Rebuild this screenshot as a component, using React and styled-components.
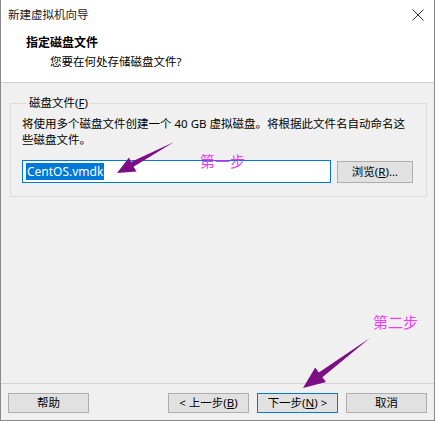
import React from 'react';
import styled, { createGlobalStyle } from 'styled-components';

const GlobalStyle = createGlobalStyle`
  html, body {
    margin: 0;
    padding: 0;
    background: #ffffff;
  }
  body {
    width: 435px;
    height: 421px;
    overflow: hidden;
    font-family: "Noto Sans", "Noto Sans CJK SC", sans-serif;
    font-size: 11.5px;
    color: #000;
  }
`;

const Window = styled.div`
  position: relative;
  box-sizing: border-box;
  width: 435px;
  height: 421px;
  display: flex;
  flex-direction: column;
  border-left: 1px solid #8a8a8a;
  border-right: 1px solid #8a8a8a;
  border-bottom: 1px solid #8a8a8a;
  background: #f0f0f0;
`;

const TitleBar = styled.div`
  height: 30px;
  background: #fff;
  display: flex;
  align-items: center;
  justify-content: space-between;
  padding: 0 10px 0 7px;
  color: #1a1a1a;
  line-height: 16px;
`;

const Header = styled.div`
  height: 53px;
  box-sizing: border-box;
  background: #fff;
  border-bottom: 1px solid #cfcfcf;
  padding: 5px 0 0 25px;
  display: flex;
  flex-direction: column;
  gap: 3px;
  line-height: 16px;
`;

const HeaderTitle = styled.div`
  font-weight: bold;
  font-size: 12px;
`;

const HeaderSub = styled.div`
  padding-left: 24px;
`;

const Body = styled.div`
  flex: 1;
  padding: 12px 7px 0 9px;
`;

const Group = styled.fieldset`
  margin: 0;
  padding: 0 13px 13px 11px;
  border: 1px solid #dcdcdc;
  min-width: 0;
`;

const Legend = styled.legend`
  margin-left: 5px;
  padding: 0 2px;
  line-height: 16px;
`;

const Description = styled.p`
  margin: 5px 0 0;
  line-height: 16px;
`;

const FileRow = styled.div`
  display: flex;
  align-items: flex-start;
  gap: 6px;
  margin-top: 12px;
`;

const TextField = styled.div`
  box-sizing: border-box;
  width: 309px;
  height: 23px;
  background: #fff;
  border: 1px solid #0078d7;
  padding: 2px 0 0 3px;
`;

const Selected = styled.span`
  display: inline-block;
  background: #0078d7;
  color: #fff;
  line-height: 17px;
  padding: 0 1px;
  font-size: 12px;
`;

const Button = styled.button`
  box-sizing: border-box;
  width: ${p => p.$w || 81}px;
  height: ${p => p.$h || 20}px;
  margin-top: ${p => p.$mt || 0}px;
  padding: 0;
  background: #e1e1e1;
  border: 1px solid ${p => (p.$default ? '#0078d7' : '#adadad')};
  font-family: inherit;
  font-size: 11.5px;
  color: #000;
  line-height: 16px;
`;

const Footer = styled.div`
  border-top: 1px solid #d5d5d5;
  height: 37px;
  box-sizing: border-box;
  padding: 9px 7px 0 7px;
  display: flex;
  gap: 8px;
`;

const Spacer = styled.div`
  flex: 1;
`;

const Overlay = styled.svg`
  position: absolute;
  left: -1px;
  top: 0;
  pointer-events: none;
`;

const Note = styled.div`
  position: absolute;
  left: ${p => p.$x}px;
  top: ${p => p.$y}px;
  color: #f03cf0;
  font-family: "Noto Sans CJK SC", sans-serif;
  font-size: 15px;
  line-height: 18px;
  white-space: nowrap;
`;

const U = styled.span`
  text-decoration: underline;
`;

const CloseIcon = () => (
  <svg width="12" height="12" viewBox="0 0 12 12">
    <path d="M0.5 0.5 L11.5 11.5 M11.5 0.5 L0.5 11.5" stroke="#333" strokeWidth="1" fill="none" />
  </svg>
);

export default function App() {
  return (
    <>
      <GlobalStyle />
      <Window>
        <TitleBar>
          <span>新建虚拟机向导</span>
          <CloseIcon />
        </TitleBar>
        <Header>
          <HeaderTitle>指定磁盘文件</HeaderTitle>
          <HeaderSub>您要在何处存储磁盘文件?</HeaderSub>
        </Header>
        <Body>
          <Group>
            <Legend>磁盘文件(<U>F</U>)</Legend>
            <Description>
              将使用多个磁盘文件创建一个 40 GB 虚拟磁盘。将根据此文件名自动命名这
              <br />
              些磁盘文件。
            </Description>
            <FileRow>
              <TextField>
                <Selected>CentOS.vmdk</Selected>
              </TextField>
              <Button $w={76} $h={22} $mt={1}>浏览(<U>R</U>)...</Button>
            </FileRow>
          </Group>
        </Body>
        <Footer>
          <Button>帮助</Button>
          <Spacer />
          <Button>&lt; 上一步(<U>B</U>)</Button>
          <Button $default>下一步(<U>N</U>) &gt;</Button>
          <Button>取消</Button>
        </Footer>

        <Note $x={199} $y={152}>第一步</Note>
        <Note $x={372} $y={313}>第二步</Note>
        <Overlay width="435" height="421" viewBox="0 0 435 421">
          <polygon
            fill="#7d0f86"
            points="174,142 131,162 129,157.4 117,173 136.6,171.4 133.5,166.8"
          />
          <polygon
            fill="#7d0f86"
            points="370,338 318.8,372.4 315.2,367.6 303,388 326,382 322.4,377.2"
          />
        </Overlay>
      </Window>
    </>
  );
}
